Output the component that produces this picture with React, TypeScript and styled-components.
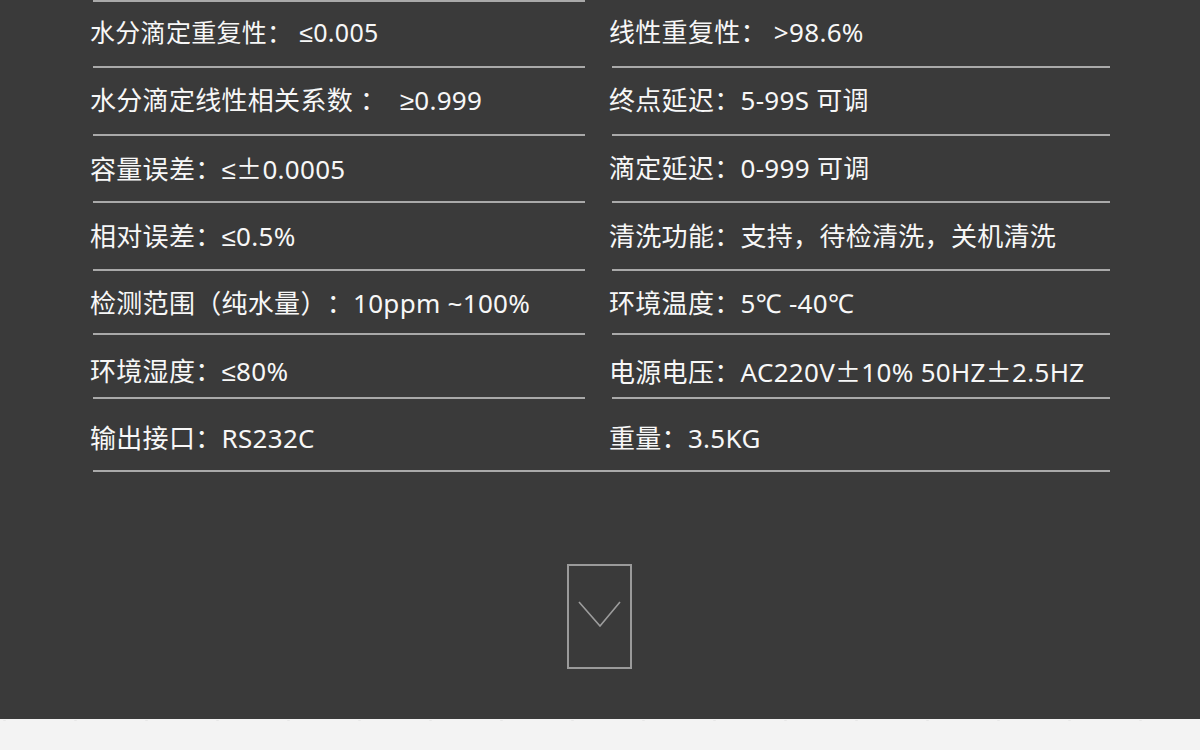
import styled, { createGlobalStyle } from 'styled-components';

const GlobalStyle = createGlobalStyle`
  html, body {
    margin: 0;
    padding: 0;
    background: #3a3a3a;
  }
  body {
    font-family: "Noto Sans", "Liberation Sans", "Noto Sans CJK SC", sans-serif;
  }
`;

type Spec = { left: string; right: string; h: number; pt: number; size?: number };

// heights follow the row lines of the spec sheet
const specs: Spec[] = [
  { left: '水分滴定重复性： ≤0.005', right: '线性重复性： >98.6%', h: 66, pt: 14, size: 25 },
  { left: '水分滴定线性相关系数 ：\u2002≥0.999', right: '终点延迟：5-99S 可调', h: 68, pt: 16 },
  { left: '容量误差：≤±0.0005', right: '滴定延迟：0-999 可调', h: 67, pt: 16 },
  { left: '相对误差：≤0.5%', right: '清洗功能：支持，待检清洗，关机清洗', h: 68, pt: 17 },
  { left: '检测范围（纯水量）：10ppm ~100%', right: '环境温度：5℃ -40℃', h: 64, pt: 16 },
  { left: '环境湿度：≤80%', right: '电源电压：AC220V±10% 50HZ±2.5HZ', h: 64, pt: 20 },
  { left: '输出接口：RS232C', right: '重量：3.5KG', h: 73, pt: 23 },
];

// the ± sign is set full width, as in the CJK font
const withWide = (text: string) =>
  text.split('±').flatMap((part, i) => (i === 0 ? [part] : [<Wide key={i}>±</Wide>, part]));

const App = () => {
  return (
    <>
      <GlobalStyle />
      <Page>
        <Sheet>
          <TopLine />
          {specs.map((s, i) => {
            const last = i === specs.length - 1;
            return (
              <Row key={i} $h={s.h} $full={last}>
                <Cell $w={492} $line={!last} $pt={s.pt}>
                  <Label $size={s.size ?? 26}>{withWide(s.left)}</Label>
                </Cell>
                <Cell $w={498} $line={!last} $pt={s.pt}>
                  <Label $size={26}>{withWide(s.right)}</Label>
                </Cell>
              </Row>
            );
          })}
        </Sheet>
        <MoreBox>
          <svg width="44" height="30" viewBox="0 0 44 30">
            <polyline points="1,1 22,25 42,1" fill="none" stroke="#9c9c9c" strokeWidth="1.6" />
          </svg>
        </MoreBox>
        <Paper />
      </Page>
    </>
  );
};

export default App;

const Page = styled.div`
  width: 1200px;
  height: 750px;
  overflow: hidden;
  background: #3a3a3a;
  display: flex;
  flex-direction: column;
`;

const Sheet = styled.div`
  display: flex;
  flex-direction: column;
  padding-left: 93px;
`;

const TopLine = styled.div`
  width: 492px;
  height: 2px;
  background: #a9a9a9;
`;

const Row = styled.div<{ $h: number; $full: boolean }>`
  display: flex;
  gap: 27px;
  width: 1017px;
  height: ${(p) => p.$h}px;
  box-sizing: border-box;
  border-bottom: ${(p) => (p.$full ? '2px solid #a9a9a9' : 'none')};
`;

const Cell = styled.div<{ $w: number; $line: boolean; $pt: number }>`
  width: ${(p) => p.$w}px;
  box-sizing: border-box;
  padding-top: ${(p) => p.$pt}px;
  border-bottom: ${(p) => (p.$line ? '2px solid #a9a9a9' : 'none')};
`;

const Label = styled.span<{ $size: number }>`
  display: block;
  margin-left: -3px;
  font-size: ${(p) => p.$size}px;
  line-height: 32px;
  letter-spacing: 0.3px;
  color: #f7f7f7;
  white-space: nowrap;
  text-spacing-trim: space-all;
`;

const Wide = styled.span`
  font-family: "Noto Sans CJK SC", sans-serif;
`;

const MoreBox = styled.div`
  align-self: center;
  margin-top: 92px;
  margin-left: -1px;
  width: 65px;
  height: 105px;
  box-sizing: border-box;
  border: 2px solid #9a9a9a;
  display: flex;
  justify-content: center;
  padding-top: 35px;
`;

const Paper = styled.div`
  margin-top: 50px;
  flex: 1;
  background-color: #f3f3f3;
  background-image: radial-gradient(rgba(0, 0, 0, 0.07) 0.8px, transparent 1.4px),
    radial-gradient(rgba(0, 0, 0, 0.05) 0.8px, transparent 1.4px);
  background-size: 131px 47px, 71px 37px;
  background-position: 12px 8px, 40px 20px;
`;
